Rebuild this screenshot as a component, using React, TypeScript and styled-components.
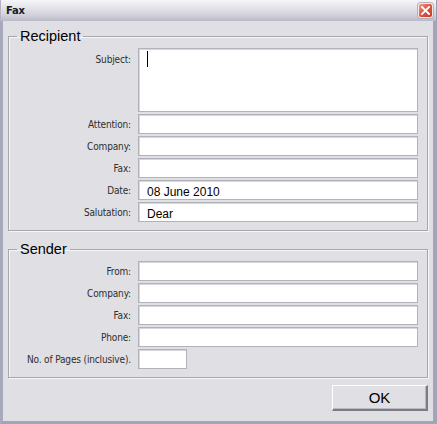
import React from 'react'
import styled, { createGlobalStyle } from 'styled-components'

const GlobalStyle = createGlobalStyle`
  html, body {
    margin: 0;
    padding: 0;
    background: #e0dfe3;
  }
  * {
    box-sizing: border-box;
  }
`

const Window = styled.div`
  width: 437px;
  height: 424px;
  display: flex;
  flex-direction: column;
  overflow: hidden;
  font-family: "DejaVu Sans Condensed", "DejaVu Sans", sans-serif;
`

const TitleBar = styled.div`
  height: 21px;
  flex: none;
  display: flex;
  align-items: center;
  justify-content: space-between;
  padding: 0 3px 0 5px;
  background: linear-gradient(#f6f6f9 0%, #e4e4ea 35%, #cfcfd9 75%, #b9b9c8 100%);
  border-left: 1px solid #b4b4c4;
  border-right: 1px solid #9c9cb0;
`

const Title = styled.span`
  font-family: "DejaVu Sans", sans-serif;
  font-weight: bold;
  font-size: 10px;
  color: #1a1a1a;
  letter-spacing: -0.2px;
`

const CloseButton = styled.div`
  width: 15px;
  height: 15px;
  border-radius: 3px;
  border: 1px solid #f4e8e8;
  background: linear-gradient(135deg, #f09a84 0%, #e05a44 45%, #c23a2a 100%);
  display: flex;
  align-items: center;
  justify-content: center;
  box-shadow: 0 0 0 1px #b8b0b8;
`

const Body = styled.div`
  flex: 1;
  display: flex;
  flex-direction: column;
  background: #e0dfe3;
  border-left: 3px solid #a9a9bd;
  border-right: 4px solid #a4a4b8;
  border-bottom: 3px solid #a4a4b8;
  padding: 7px 5px 0 5px;
`

const Group = styled.fieldset<{ $gap?: number }>`
  margin: ${p => p.$gap ?? 0}px 0 0 0;
  padding: 3px 9px 8px 0;
  border: 1px solid #a6a6ad;
  box-shadow: inset 1px 1px 0 #f6f6f8, 1px 1px 0 #f6f6f8;
  min-width: 0;
`

const Legend = styled.legend`
  font-family: "Liberation Sans", Arial, sans-serif;
  font-size: 14.5px;
  line-height: 17px;
  color: #000;
  margin-left: 8px;
  padding: 0 3px;
`

const Form = styled.div`
  display: grid;
  grid-template-columns: 122px 1fr;
  column-gap: 7px;
  row-gap: 2px;
`

const Label = styled.label<{ $top?: boolean }>`
  font-size: 10px;
  letter-spacing: -0.15px;
  color: #2e2e2e;
  text-align: right;
  white-space: nowrap;
  align-self: ${p => (p.$top ? 'start' : 'center')};
  padding-top: ${p => (p.$top ? '6px' : '1px')};
`

const Field = styled.input<{ $width?: number }>`
  height: 20px;
  width: ${p => (p.$width ? `${p.$width}px` : '100%')};
  margin: 0;
  padding: 4px 8px 0 8px;
  border: 1px solid #b2b2ba;
  box-shadow: inset 1px 1px 0 #d6d6dc;
  background: #fff;
  font-family: "Liberation Sans", Arial, sans-serif;
  font-size: 12px;
  color: #000;
  outline: none;
`

const AreaWrap = styled.div`
  position: relative;
  height: 64px;
`

const Area = styled.textarea`
  width: 100%;
  height: 64px;
  margin: 0;
  padding: 3px 8px;
  border: 1px solid #b2b2ba;
  box-shadow: inset 1px 1px 0 #d6d6dc;
  background: #fff;
  resize: none;
  outline: none;
  display: block;
  font-family: "Liberation Sans", Arial, sans-serif;
  font-size: 12px;
`

const Caret = styled.span`
  position: absolute;
  left: 9px;
  top: 3px;
  width: 1px;
  height: 16px;
  background: #000;
`

const Footer = styled.div`
  display: flex;
  justify-content: flex-end;
  padding-top: 7px;
`

const Button = styled.button`
  width: 96px;
  height: 26px;
  margin: 0;
  padding: 0;
  background: #e0dfe3;
  border: none;
  border-top: 1px solid #ffffff;
  border-left: 1px solid #ffffff;
  border-right: 2px solid #7c7c86;
  border-bottom: 2px solid #7c7c86;
  box-shadow: inset -1px -1px 0 #b8b8c0;
  font-family: "Liberation Sans", Arial, sans-serif;
  font-size: 15px;
  color: #000;
`

type Row = { label: string; value?: string; width?: number }

const recipientRows: Row[] = [
  { label: 'Attention:' },
  { label: 'Company:' },
  { label: 'Fax:' },
  { label: 'Date:', value: '08 June 2010' },
  { label: 'Salutation:', value: 'Dear' },
]

const senderRows: Row[] = [
  { label: 'From:' },
  { label: 'Company:' },
  { label: 'Fax:' },
  { label: 'Phone:' },
  { label: 'No. of Pages (inclusive).', width: 49 },
]

const renderRows = (rows: Row[]) =>
  rows.map(r => (
    <React.Fragment key={r.label}>
      <Label>{r.label}</Label>
      <div>
        <Field $width={r.width} defaultValue={r.value ?? ''} />
      </div>
    </React.Fragment>
  ))

export default function App() {
  return (
    <>
      <GlobalStyle />
      <Window>
        <TitleBar>
          <Title>Fax</Title>
          <CloseButton>
            <svg width="11" height="11" viewBox="0 0 11 11">
              <path d="M2 2 L9 9 M9 2 L2 9" stroke="#fff" strokeWidth="1.8" strokeLinecap="square" />
            </svg>
          </CloseButton>
        </TitleBar>
        <Body>
          <Group>
            <Legend>Recipient</Legend>
            <Form>
              <Label $top>Subject:</Label>
              <AreaWrap>
                <Area defaultValue="" />
                <Caret />
              </AreaWrap>
              {renderRows(recipientRows)}
            </Form>
          </Group>
          <Group $gap={10}>
            <Legend>Sender</Legend>
            <Form>{renderRows(senderRows)}</Form>
          </Group>
          <Footer>
            <Button>OK</Button>
          </Footer>
        </Body>
      </Window>
    </>
  )
}
